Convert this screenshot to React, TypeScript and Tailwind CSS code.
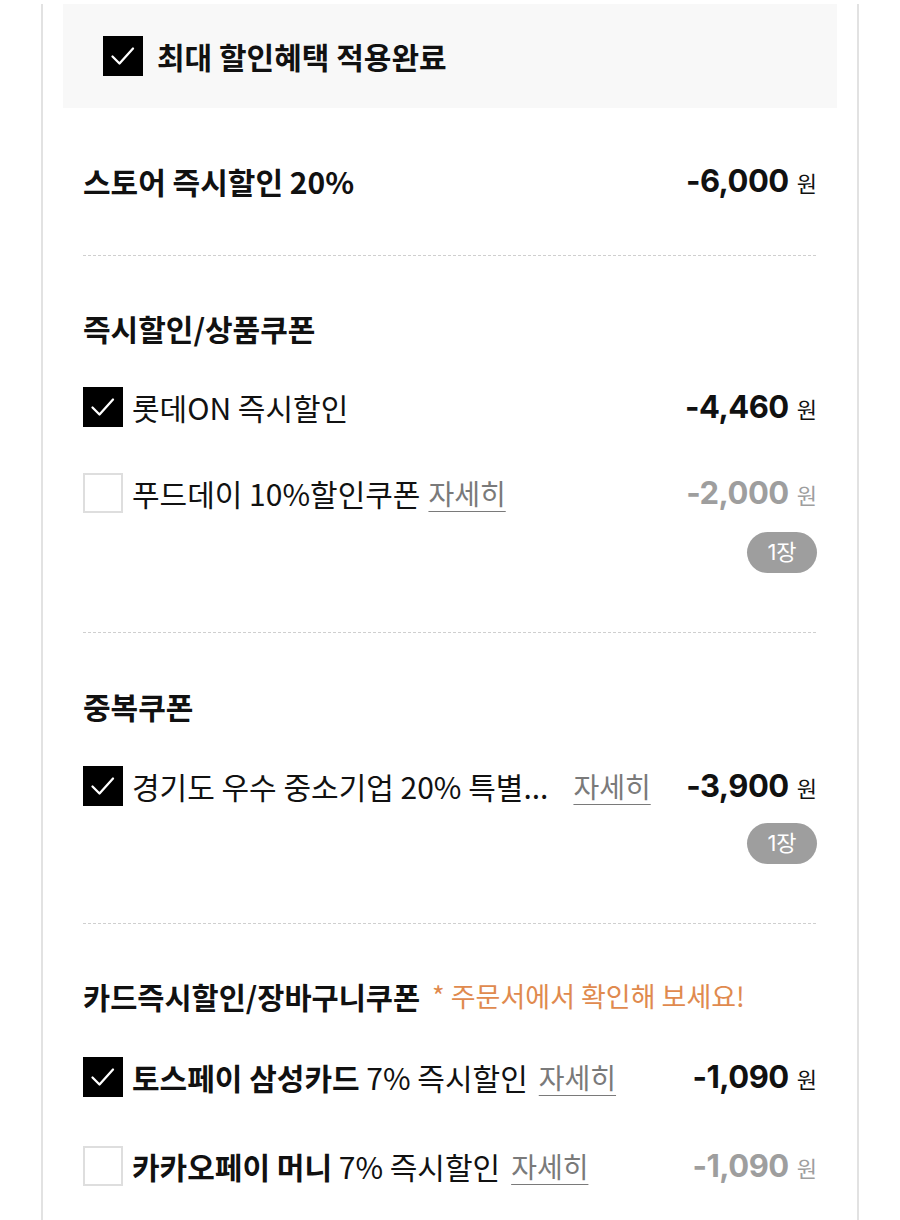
import React from "react";

const KR = "font-['Noto_Sans_CJK_KR','Noto_Sans',sans-serif]";
const NUM = "font-['Inter','Noto_Sans_CJK_KR',sans-serif]";

function Check({ on }: { on: boolean }) {
  if (on) {
    return (
      <span className="flex h-[40px] w-[40px] shrink-0 items-center justify-center bg-black">
        <svg width="40" height="40" viewBox="0 0 40 40" fill="none">
          <polyline points="9.5,20.5 16.5,27.5 30,12.5" stroke="#fff" strokeWidth="2.3" strokeLinecap="round" strokeLinejoin="round" />
        </svg>
      </span>
    );
  }
  return <span className="block h-[40px] w-[40px] shrink-0 border-2 border-[#dedede] bg-white" />;
}

function Price({ value, muted }: { value: string; muted?: boolean }) {
  return (
    <span className={`ml-auto flex shrink-0 items-baseline ${muted ? "text-[#9e9e9e]" : "text-[#111]"}`}>
      <span className={`${NUM} text-[31px] font-bold tracking-[-0.5px]`}>{value}</span>
      <span className={`${KR} ml-[8px] text-[22px]`}>원</span>
    </span>
  );
}

function Detail({ className = "" }: { className?: string }) {
  return (
    <span className={`${KR} text-[28px] text-[#7a7a7a] underline decoration-1 underline-offset-[6px] ${className}`}>자세히</span>
  );
}

function Badge() {
  return (
    <div className="flex justify-end">
      <span className={`${NUM} flex h-[41px] w-[70px] items-center justify-center rounded-full bg-[#9e9e9e] text-[22px] text-white`}>1장</span>
    </div>
  );
}

function Dashed() {
  return <div className="h-px w-full bg-[linear-gradient(to_right,#cfcfcf_60%,transparent_60%)] bg-[length:5px_1px]" />;
}

function Title({ children }: { children: React.ReactNode }) {
  return <div className={`${KR} flex h-[40px] items-center text-[30px] font-bold text-[#111]`}>{children}</div>;
}

export default function App() {
  return (
    <div className="min-h-[1220px] bg-white pt-[4px]">
      <div className="ml-[41px] w-[818px] border-x-2 border-[#e2e2e2] px-[20px] pb-[40px]">
        <div className="flex h-[104px] items-center bg-[#f8f8f8] pl-[40px]">
          <Check on />
          <span className={`${KR} ml-[14px] text-[30px] font-bold text-[#111]`}>최대 할인혜택 적용완료</span>
        </div>

        <div className="px-[20px]">
          <div className="flex h-[147px] items-center">
            <span className={`${KR} text-[30px] font-bold text-[#111]`}>스토어 즉시할인 20%</span>
            <Price value="-6,000" />
          </div>
          <Dashed />

          <div className="pt-[52px] pb-[59px]">
            <Title>즉시할인/상품쿠폰</Title>
            <div className="mt-[39px] flex h-[40px] items-center">
              <Check on />
              <span className={`${KR} ml-[9px] text-[30px] text-[#111]`}>롯데ON 즉시할인</span>
              <Price value="-4,460" />
            </div>
            <div className="mt-[46px] flex h-[40px] items-center">
              <Check on={false} />
              <span className={`${KR} ml-[9px] text-[30px] text-[#111]`}>푸드데이 10%할인쿠폰</span>
              <Detail className="ml-[8px]" />
              <Price value="-2,000" muted />
            </div>
            <div className="mt-[19px]">
              <Badge />
            </div>
          </div>
          <Dashed />

          <div className="pt-[53px] pb-[59px]">
            <Title>중복쿠폰</Title>
            <div className="mt-[40px] flex h-[40px] items-center">
              <Check on />
              <span className={`${KR} ml-[9px] text-[30px] text-[#111]`}>경기도 우수 중소기업 20% 특별...</span>
              <Detail className="ml-[25px]" />
              <Price value="-3,900" />
            </div>
            <div className="mt-[17px]">
              <Badge />
            </div>
          </div>
          <Dashed />

          <div className="pt-[52px]">
            <div className="flex h-[40px] items-center">
              <span className={`${KR} text-[29.5px] font-bold text-[#111]`}>카드즉시할인/장바구니쿠폰</span>
              <span className={`${KR} ml-[12px] text-[27px] text-[#e08a4e]`}>* 주문서에서 확인해 보세요!</span>
            </div>
            <div className="mt-[41px] flex h-[40px] items-center">
              <Check on />
              <span className={`${KR} ml-[9px] text-[30px] text-[#111]`}>
                <span className="font-bold">토스페이 삼성카드</span> 7% 즉시할인
              </span>
              <Detail className="ml-[11px]" />
              <Price value="-1,090" />
            </div>
            <div className="mt-[49px] flex h-[40px] items-center">
              <Check on={false} />
              <span className={`${KR} ml-[9px] text-[30px] text-[#111]`}>
                <span className="font-bold">카카오페이 머니</span> 7% 즉시할인
              </span>
              <Detail className="ml-[11px]" />
              <Price value="-1,090" muted />
            </div>
          </div>
        </div>
      </div>
    </div>
  );
}
